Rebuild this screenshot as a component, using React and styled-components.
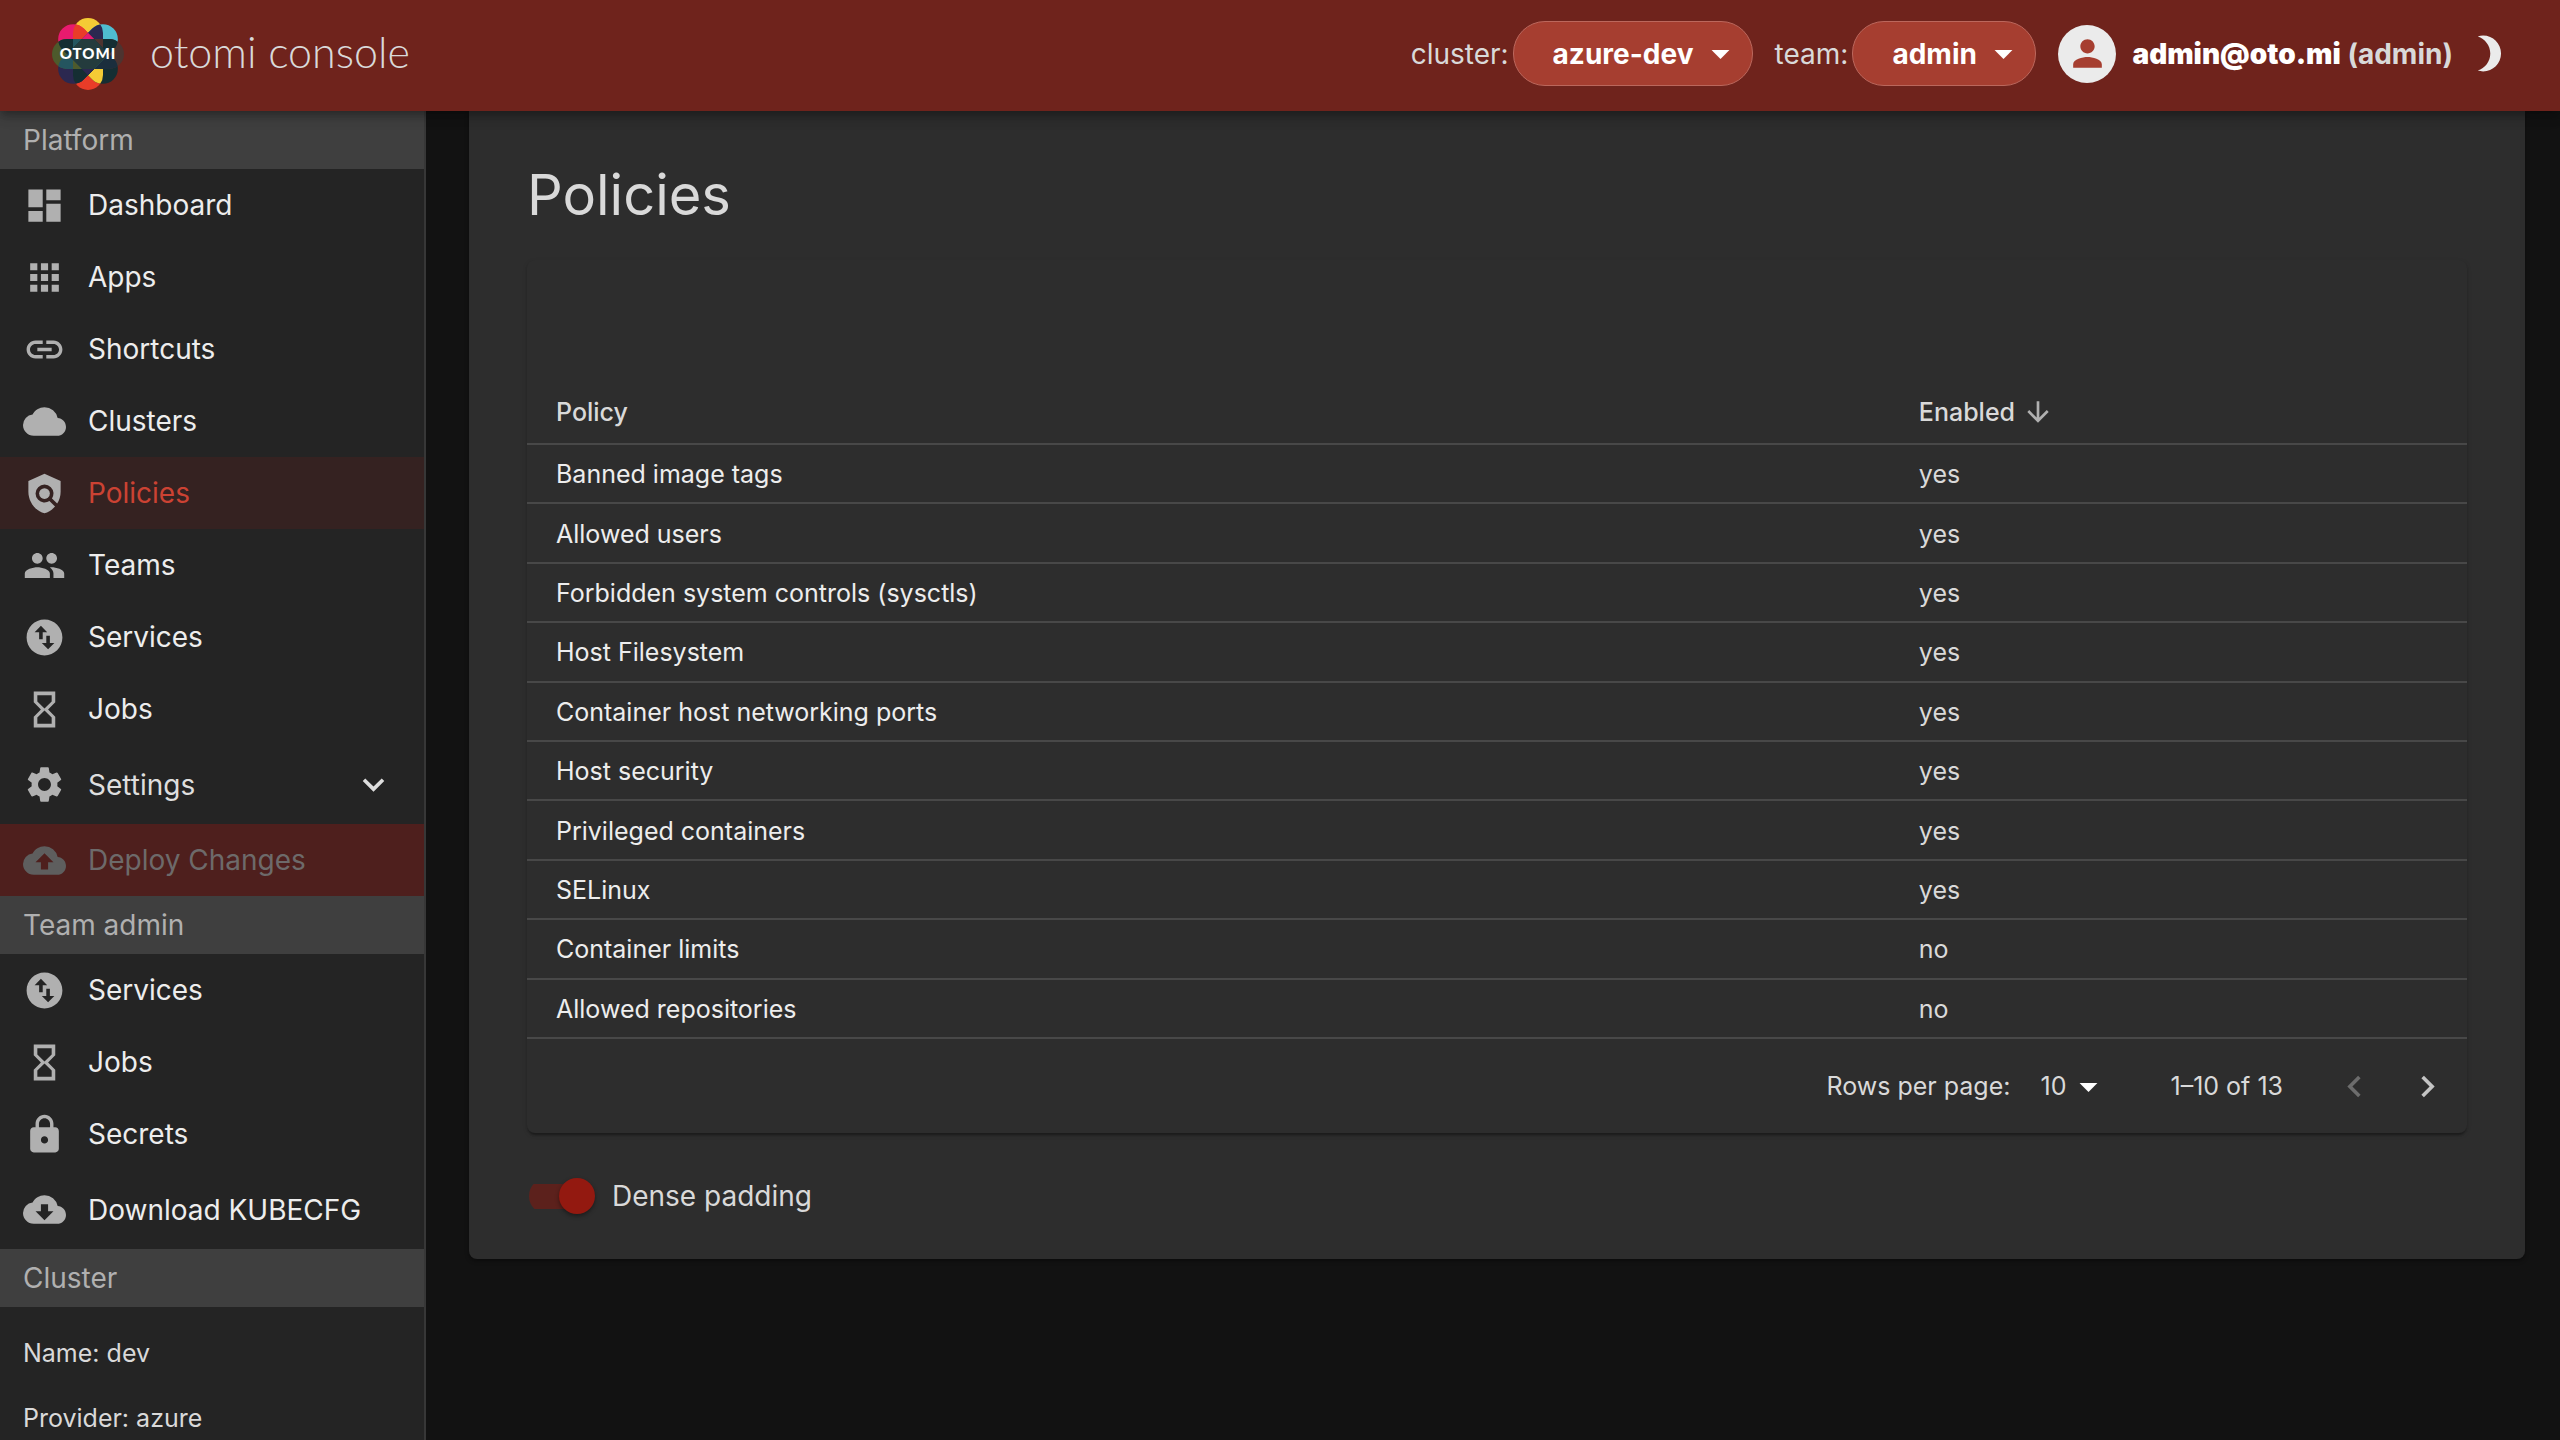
import React from "react";
import styled, { createGlobalStyle, css } from "styled-components";
import {
  MdApps,
  MdArrowDownward,
  MdArrowDropDown,
  MdBrightness3,
  MdCloud,
  MdCloudDownload,
  MdDashboard,
  MdExpandMore,
  MdHourglassEmpty,
  MdKeyboardArrowLeft,
  MdKeyboardArrowRight,
  MdLink,
  MdLock,
  MdCloudUpload,
  MdPeople,
  MdPerson,
  MdPolicy,
  MdSettings,
  MdSwapVerticalCircle,
} from "react-icons/md";

const GlobalStyle = createGlobalStyle`
  *, *::before, *::after { box-sizing: border-box; }
  body {
    margin: 0;
    background: #121212;
    color: #d9d9d9;
    font-family: Inter, "Liberation Sans", sans-serif;
    font-size: 28px;
    -webkit-font-smoothing: antialiased;
  }
  button, select, input { font: inherit; color: inherit; margin: 0; }
  svg { display: block; flex: none; }
`;

const Shell = styled.div`
  display: grid;
  grid-template-columns: 426px minmax(0, 1fr);
  grid-template-rows: auto minmax(0, 1fr);
  height: 100vh;
  overflow: hidden;
`;

const AppBar = styled.header`
  grid-column: 1 / -1;
  position: relative;
  z-index: 2;
  display: flex;
  align-items: center;
  justify-content: space-between;
  height: 111px;
  padding: 0 50px 4px 52px;
  background: #6f231c;
  box-shadow: 0 4px 7px -2px rgba(0, 0, 0, 0.2), 0 7px 9px rgba(0, 0, 0, 0.14), 0 2px 18px rgba(0, 0, 0, 0.12);
`;

const Brand = styled.a`
  display: flex;
  align-items: center;
  gap: 26px;
  color: #d9d9d9;
  text-decoration: none;
  font-family: Lato, sans-serif;
  font-weight: 300;
  font-size: 43px;
  line-height: 52px;
`;

const BrandName = styled.span`
  padding-bottom: 4px;
`;

const Tools = styled.div`
  display: flex;
  align-items: center;
`;

const Picker = styled.div`
  display: flex;
  align-items: center;
  gap: 4px;
  margin-right: 22px;
`;

const SelectBox = styled.div`
  display: grid;
  align-items: center;
  > * { grid-area: 1 / 1; }
  > svg {
    justify-self: end;
    margin-right: ${(p) => (p.$pill ? 11 : 0)}px;
    color: #fff;
    pointer-events: none;
  }
`;

const PillSelect = styled.select`
  appearance: none;
  height: 65px;
  padding: 0 58px 0 39px;
  border: 1px solid #bb675c;
  border-radius: 32px;
  background: #a63e30;
  color: #fff;
  font-weight: 700;
`;

const Avatar = styled.span`
  display: grid;
  place-items: center;
  width: 58px;
  height: 58px;
  margin-right: 16px;
  border-radius: 50%;
  background: #ebebeb;
  color: #a63e30;
`;

const User = styled.span`
  margin-right: 14px;
  font-weight: 700;
  color: #d9d9d9;
  strong { color: #fff; }
`;

const IconButton = styled.button`
  display: grid;
  place-items: center;
  padding: 0;
  border: 0;
  background: none;
  color: ${(p) => p.$color || "#ebebeb"};
`;

const Sidebar = styled.nav`
  overflow: hidden;
  border-right: 2px solid #373737;
  background: #242424;
`;

const SectionTitle = styled.h2`
  margin: 0;
  padding: 0 23px;
  background: #3f3f3f;
  color: #b0b0b0;
  font-size: 28px;
  font-weight: 400;
  line-height: 58px;
`;

const itemStyle = css`
  display: flex;
  align-items: center;
  gap: 22px;
  width: 100%;
  height: ${(p) => (p.$tall ? 79 : 72)}px;
  padding: 0 29px 0 23px;
  border: 0;
  background: none;
  color: #ededed;
  font-size: 28px;
  text-align: left;
  text-decoration: none;
  > svg { color: #b0b0b0; }
  > span { flex: 1; }
`;

const NavLink = styled.a`
  ${itemStyle}
  ${(p) => p.$active && "background: #352221; color: #cc4233;"}
`;

const NavButton = styled.button`
  ${itemStyle}
  color: #dedede;
  > span + svg { color: #dedede; }
  &:disabled {
    background: #4e1f1d;
    color: #6d6a6a;
    > svg { color: #5e5e5e; }
  }
`;

const Facts = styled.ul`
  margin: 0;
  padding: 14px 23px;
  list-style: none;
  color: #d9d9d9;
  font-size: 25px;
  line-height: 65px;
`;

const Main = styled.main`
  padding: 0 35px 0 43px;
`;

const Panel = styled.section`
  padding: 48px 58px 30px;
  border-radius: 0 0 8px 8px;
  background: #2d2d2d;
  box-shadow: 0 2px 4px rgba(0, 0, 0, 0.4);
`;

const PageTitle = styled.h1`
  margin: 0 0 29px;
  color: #d9d9d9;
  font-size: 56px;
  font-weight: 400;
  line-height: 72px;
`;

const Paper = styled.div`
  padding-top: 115px;
  border-radius: 8px;
  background: #2d2d2d;
  box-shadow: 0 4px 2px -2px rgba(0, 0, 0, 0.2), 0 2px 2px rgba(0, 0, 0, 0.14), 0 2px 5px rgba(0, 0, 0, 0.12);
`;

const Table = styled.table`
  width: 100%;
  height: 664px;
  border-collapse: separate;
  border-spacing: 0;
  table-layout: fixed;
  font-size: 25px;
  line-height: 36px;
`;

const cellStyle = css`
  padding: 1px 29px 0;
  border-bottom: 2px solid #484848;
  text-align: left;
  vertical-align: middle;
`;

const HeadCell = styled.th`
  ${cellStyle}
  width: ${(p) => p.$width};
  height: 70px;
  padding-top: 5px;
  color: #d9d9d9;
  font-weight: 500;
`;

const SortButton = styled.button`
  display: flex;
  align-items: center;
  gap: 7px;
  padding: 0;
  border: 0;
  background: none;
  > svg { color: #b0b0b0; }
`;

const Cell = styled.td`
  ${cellStyle}
  height: 59px;
  color: ${(p) => (p.$name ? "#ededed" : "#d9d9d9")};
`;

const Pagination = styled.div`
  display: flex;
  align-items: center;
  justify-content: flex-end;
  height: 94px;
  padding-right: 18px;
  font-size: 25px;
`;

const RowsSelect = styled.select`
  appearance: none;
  margin-left: 30px;
  padding: 0 44px 0 0;
  border: 0;
  background: none;
`;

const Range = styled.span`
  margin: 0 50px 0 60px;
`;

const Pager = styled.div`
  display: flex;
  gap: 30px;
`;

const SwitchLabel = styled.label`
  display: inline-flex;
  align-items: center;
  gap: 17px;
  height: 36px;
  margin: 45px 0 15px 2px;
`;

const Switch = styled.input`
  appearance: none;
  display: flex;
  align-items: center;
  justify-content: flex-end;
  width: 66px;
  height: 36px;
  background: linear-gradient(#5c211c, #5c211c) 0 50% / 61px 25px no-repeat;
  border-radius: 18px;
  &::before {
    content: "";
    width: 36px;
    height: 36px;
    border-radius: 50%;
    background: #931910;
    box-shadow: 0 2px 4px rgba(0, 0, 0, 0.4);
  }
`;

const LogoText = styled.text`
  font-family: Lato, sans-serif;
  font-weight: 900;
  font-size: 15px;
  letter-spacing: 1px;
  fill: #fff;
`;

const ICON = 43;

function Logo() {
  const upper = { x: 0, y: 0, width: 72, height: 36 };
  const lower = { x: 0, y: 36, width: 72, height: 36 };
  const pill = { x: 21, y: 0, width: 30, height: 72, rx: 15 };
  return (
    <svg width="72" height="72" viewBox="0 0 72 72" role="img" aria-label="Otomi">
      <defs>
        <clipPath id="v"><rect {...pill} /></clipPath>
        <clipPath id="a"><rect {...pill} transform="rotate(-45 36 36)" /></clipPath>
        <clipPath id="b"><rect {...pill} transform="rotate(45 36 36)" /></clipPath>
        <clipPath id="h"><rect x="0" y="21" width="72" height="30" rx="15" /></clipPath>
      </defs>
      <g clipPath="url(#v)">
        <rect {...upper} fill="#f4cb35" />
        <rect {...lower} fill="#e93c28" />
      </g>
      <g clipPath="url(#a)">
        <rect {...upper} fill="#e91a6e" />
        <rect {...lower} fill="#152e33" />
        <g clipPath="url(#v)">
          <rect {...upper} fill="#ea3c28" />
          <rect {...lower} fill="#f4cb35" />
        </g>
      </g>
      <g clipPath="url(#b)">
        <rect {...upper} fill="#4fbdd0" />
        <rect {...lower} fill="#2b2850" />
        <g clipPath="url(#v)">
          <rect {...upper} fill="#2b2850" />
          <rect {...lower} fill="#152e33" />
          <g clipPath="url(#a)">
            <rect {...upper} fill="#e91a6e" />
            <rect {...lower} fill="#2b2850" />
          </g>
        </g>
      </g>
      <g clipPath="url(#h)">
        <rect width="36" height="72" fill="#4d5a2c" />
        <rect x="36" width="36" height="72" fill="#4d3430" />
        <g clipPath="url(#a)">
          <rect {...upper} fill="#152e33" />
          <rect {...lower} fill="#1b2e3d" />
        </g>
        <g clipPath="url(#b)">
          <rect {...upper} fill="#152e33" />
          <rect {...lower} fill="#24555f" />
        </g>
        <path d="M21 21h9l-9 9z" fill="#24555f" />
        <path d="M42 21h9v9z" fill="#4d3430" />
        <path d="M21 42l9 9h-9z" fill="#4d5a2c" />
        <path d="M30 21h12l15 15-15 15H30L15 36z" fill="#243b3d" />
      </g>
      <LogoText x="36" y="41" textAnchor="middle">OTOMI</LogoText>
    </svg>
  );
}

const PLATFORM = [
  ["Dashboard", MdDashboard],
  ["Apps", MdApps],
  ["Shortcuts", MdLink],
  ["Clusters", MdCloud],
  ["Policies", MdPolicy],
  ["Teams", MdPeople],
  ["Services", MdSwapVerticalCircle],
  ["Jobs", MdHourglassEmpty],
];

const TEAM = [
  ["Services", MdSwapVerticalCircle],
  ["Jobs", MdHourglassEmpty],
  ["Secrets", MdLock],
  ["Download KUBECFG", MdCloudDownload],
];

const POLICIES = [
  ["Banned image tags", "yes"],
  ["Allowed users", "yes"],
  ["Forbidden system controls (sysctls)", "yes"],
  ["Host Filesystem", "yes"],
  ["Container host networking ports", "yes"],
  ["Host security", "yes"],
  ["Privileged containers", "yes"],
  ["SELinux", "yes"],
  ["Container limits", "no"],
  ["Allowed repositories", "no"],
];

function NavItem({ label, icon: Icon, active, tall }) {
  return (
    <NavLink href="#" $active={active} $tall={tall} aria-current={active ? "page" : undefined}>
      <Icon size={ICON} />
      <span>{label}</span>
    </NavLink>
  );
}

function PillPicker({ id, label, value }) {
  return (
    <Picker>
      <label htmlFor={id}>{label}</label>
      <SelectBox $pill>
        <PillSelect id={id} defaultValue={value}>
          <option>{value}</option>
        </PillSelect>
        <MdArrowDropDown size={ICON} />
      </SelectBox>
    </Picker>
  );
}

export default function App() {
  return (
    <Shell>
      <GlobalStyle />
      <AppBar>
        <Brand href="#">
          <Logo />
          <BrandName>otomi console</BrandName>
        </Brand>
        <Tools>
          <PillPicker id="cluster" label="cluster:" value="azure-dev" />
          <PillPicker id="team" label="team:" value="admin" />
          <Avatar>
            <MdPerson size={ICON} />
          </Avatar>
          <User>
            <strong>admin@oto.mi</strong> (admin)
          </User>
          <IconButton aria-label="Toggle theme">
            <MdBrightness3 size={ICON} />
          </IconButton>
        </Tools>
      </AppBar>
      <Sidebar>
        <SectionTitle>Platform</SectionTitle>
        {PLATFORM.map(([label, icon]) => (
          <NavItem key={label} label={label} icon={icon} active={label === "Policies"} />
        ))}
        <NavButton $tall>
          <MdSettings size={ICON} />
          <span>Settings</span>
          <MdExpandMore size={ICON} />
        </NavButton>
        <NavButton disabled>
          <MdCloudUpload size={ICON} />
          <span>Deploy Changes</span>
        </NavButton>
        <SectionTitle>Team admin</SectionTitle>
        {TEAM.map(([label, icon]) => (
          <NavItem key={label} label={label} icon={icon} tall={label.startsWith("Download")} />
        ))}
        <SectionTitle>Cluster</SectionTitle>
        <Facts>
          <li>Name: dev</li>
          <li>Provider: azure</li>
        </Facts>
      </Sidebar>
      <Main>
        <Panel>
          <PageTitle>Policies</PageTitle>
          <Paper>
            <Table>
              <thead>
                <tr>
                  <HeadCell $width="70.25%">Policy</HeadCell>
                  <HeadCell aria-sort="descending">
                    <SortButton>
                      Enabled
                      <MdArrowDownward size={32} />
                    </SortButton>
                  </HeadCell>
                </tr>
              </thead>
              <tbody>
                {POLICIES.map(([name, enabled]) => (
                  <tr key={name}>
                    <Cell $name>{name}</Cell>
                    <Cell>{enabled}</Cell>
                  </tr>
                ))}
              </tbody>
            </Table>
            <Pagination>
              <label htmlFor="rows">Rows per page:</label>
              <SelectBox>
                <RowsSelect id="rows" defaultValue="10">
                  <option>10</option>
                </RowsSelect>
                <MdArrowDropDown size={ICON} />
              </SelectBox>
              <Range>1–10 of 13</Range>
              <Pager>
                <IconButton disabled aria-label="Previous page" $color="#6c6c6c">
                  <MdKeyboardArrowLeft size={ICON} />
                </IconButton>
                <IconButton aria-label="Next page" $color="#c4c4c4">
                  <MdKeyboardArrowRight size={ICON} />
                </IconButton>
              </Pager>
            </Pagination>
          </Paper>
          <SwitchLabel>
            <Switch type="checkbox" role="switch" defaultChecked />
            Dense padding
          </SwitchLabel>
        </Panel>
      </Main>
    </Shell>
  );
}
